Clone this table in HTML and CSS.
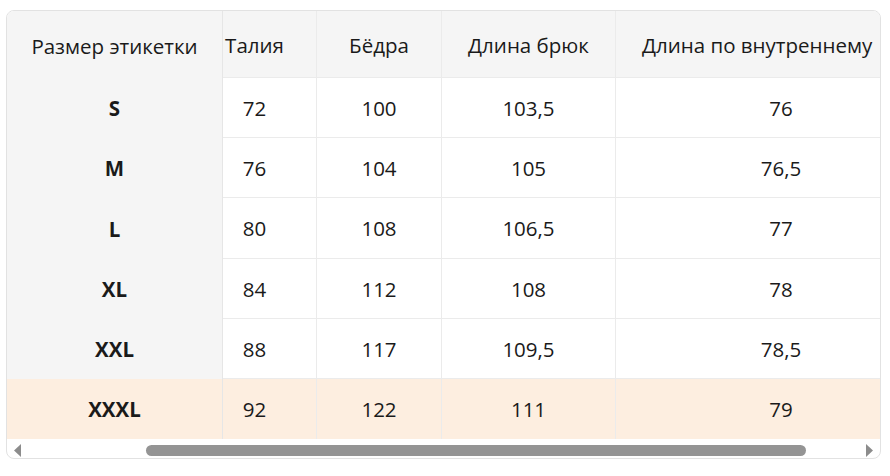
FILE: index.html
```html
<!DOCTYPE html>
<html lang="ru">
<head>
<meta charset="utf-8">
<title>Таблица размеров</title>
<link rel="stylesheet" href="styles.css">
</head>
<body>
<div class="frame">
  <div class="grid">
    <div class="cell head first">Размер этикетки</div>
    <div class="cell head c2">Талия</div>
    <div class="cell head">Бёдра</div>
    <div class="cell head">Длина брюк</div>
    <div class="cell head last-h">Длина по внутреннему</div>

    <div class="cell first">S</div>
    <div class="cell c2">72</div>
    <div class="cell">100</div>
    <div class="cell">103,5</div>
    <div class="cell last">76</div>

    <div class="cell first">M</div>
    <div class="cell c2">76</div>
    <div class="cell">104</div>
    <div class="cell">105</div>
    <div class="cell last">76,5</div>

    <div class="cell first">L</div>
    <div class="cell c2">80</div>
    <div class="cell">108</div>
    <div class="cell">106,5</div>
    <div class="cell last">77</div>

    <div class="cell first">XL</div>
    <div class="cell c2">84</div>
    <div class="cell">112</div>
    <div class="cell">108</div>
    <div class="cell last">78</div>

    <div class="cell first">XXL</div>
    <div class="cell c2">88</div>
    <div class="cell">117</div>
    <div class="cell">109,5</div>
    <div class="cell last">78,5</div>

    <div class="cell first hl end">XXXL</div>
    <div class="cell c2 hl end">92</div>
    <div class="cell hl end">122</div>
    <div class="cell hl end">111</div>
    <div class="cell last hl end">79</div>
  </div>
  <div class="hscroll">
    <svg class="arrow" width="7" height="13" viewBox="0 0 7 13"><polygon points="7,0 7,13 0,6.5" fill="#8c8c8c"/></svg>
    <div class="track"><div class="thumb"></div></div>
    <svg class="arrow" width="7" height="13" viewBox="0 0 7 13"><polygon points="0,0 0,13 7,6.5" fill="#8c8c8c"/></svg>
  </div>
</div>
</body>
</html>
```
FILE: styles.css
```css
html, body {
  margin: 0;
  padding: 0;
  background: #ffffff;
}
body {
  padding: 10px 9px 0 6px;
  font-family: "Open Sans", "Noto Sans", "DejaVu Sans", sans-serif;
  color: #1a1a1a;
}
.frame {
  width: 875px;
  box-sizing: border-box;
  border: 1px solid #e2e2e2;
  border-radius: 8px;
  overflow: hidden;
  background: #fff;
}
.grid {
  display: grid;
  grid-template-columns: 216px 94px 125px 174px 264px;
  grid-template-rows: 67px 60px 60px 61px 60px 60px 60px;
}
.cell {
  box-sizing: border-box;
  display: flex;
  align-items: center;
  justify-content: center;
  font-size: 20.5px;
  white-space: nowrap;
  overflow: hidden;
  border-right: 1px solid #ebebeb;
  border-bottom: 1px solid #ebebeb;
  background: #fff;
}
.head {
  background: #f5f5f5;
  padding-top: 2px;
}
.first {
  background: #f5f5f5;
  font-weight: 700;
  border-bottom: none;
  border-right: 1px solid #e6e6e6;
}
.head.first {
  font-weight: 400;
}
.c2 {
  padding-right: 30px;
}
.last-h {
  justify-content: flex-start;
  padding-left: 26px;
  border-right: none;
}
.last {
  padding-left: 66px;
  border-right: none;
}
.hl {
  background: #fdeee0;
}
.end {
  border-bottom: none;
}
.hscroll {
  height: 19px;
  display: flex;
  align-items: center;
  padding: 0 7px 0 7px;
  box-sizing: border-box;
}
.arrow {
  flex: none;
  margin-top: 3px;
}
.track {
  flex: 1;
  height: 11px;
  margin-top: 3px;
  padding-left: 125px;
  box-sizing: border-box;
}
.thumb {
  width: 660px;
  height: 11px;
  border-radius: 6px;
  background: #949494;
}
```
